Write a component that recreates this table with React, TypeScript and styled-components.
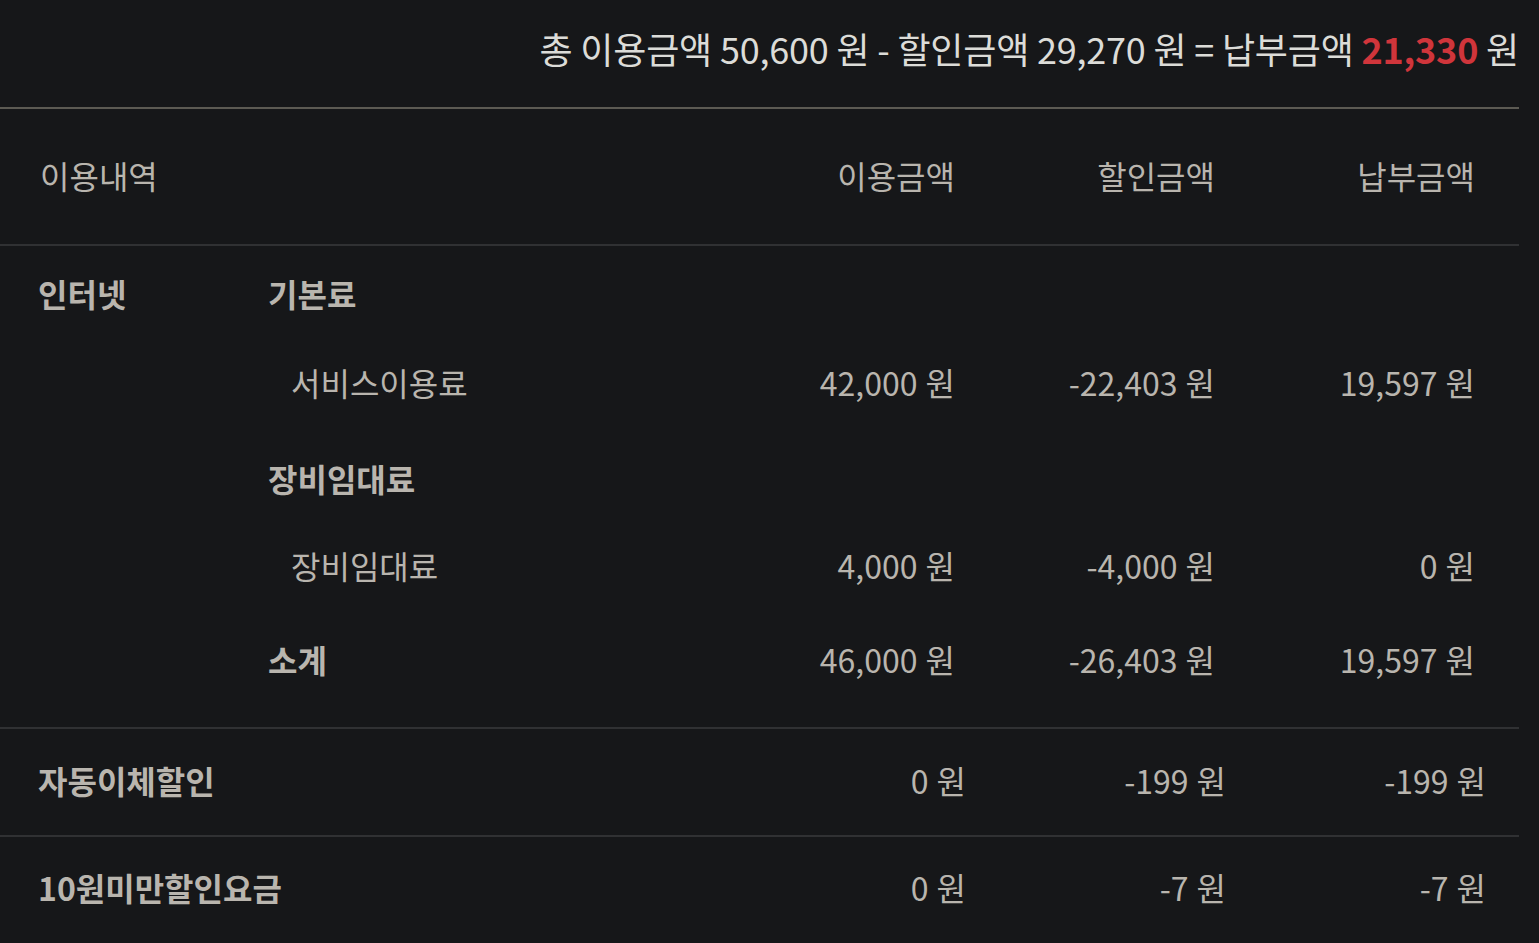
import React from "react";
import styled, { createGlobalStyle } from "styled-components";

const Global = createGlobalStyle`
  html, body {
    margin: 0;
    padding: 0;
    background: #161719;
  }
  body {
    font-family: "Noto Sans CJK KR", "Noto Sans", sans-serif;
    color: #b9b5ae;
  }
`;

const Page = styled.div`
  width: 1519px;
  min-height: 943px;
  background: #161719;
`;

const Summary = styled.div`
  height: 95px;
  padding-bottom: 12px;
  display: flex;
  align-items: center;
  justify-content: flex-end;
  border-bottom: 2px solid #5c5a53;
  font-size: 36px;
  letter-spacing: -0.2px;
  color: #dcdcd8;
  white-space: pre;
`;

const Red = styled.span`
  color: #d0353b;
  font-weight: 700;
`;

const Row = styled.div<{ $h: number; $pr: number; $pb: number; $line?: boolean }>`
  box-sizing: border-box;
  display: flex;
  align-items: center;
  height: ${(p) => p.$h}px;
  padding-right: ${(p) => p.$pr}px;
  padding-bottom: ${(p) => p.$pb}px;
  border-bottom: ${(p) => (p.$line ? "2px solid #303133" : "none")};
`;

const Label = styled.div<{ $bold?: boolean; $pl: number }>`
  flex: 1;
  padding-left: ${(p) => p.$pl}px;
  font-size: 32px;
  font-weight: ${(p) => (p.$bold ? 700 : 400)};
  color: #b9b5ae;
`;

const Cell = styled.div<{ $dy?: number }>`
  width: 260px;
  text-align: right;
  font-size: 32px;
  color: #b9b5ae;
  white-space: nowrap;
`;

const Won = styled.span`
  margin-left: 8px;
`;

const Group = styled.div`
  display: flex;
  padding-top: 17px;
  padding-bottom: 38px;
  border-bottom: 2px solid #303133;
`;

const GroupName = styled.div`
  width: 230px;
  padding-left: 38px;
  height: 60px;
  line-height: 60px;
  font-size: 32px;
  font-weight: 700;
  flex-shrink: 0;
`;

const Sub = styled.div`
  flex: 1;
  display: flex;
  flex-direction: column;
`;

const SubRow = styled.div<{ $mt: number }>`
  display: flex;
  align-items: center;
  height: 60px;
  margin-top: ${(p) => p.$mt}px;
  padding-right: 44px;
`;

type Vals = [string, string, string];

const Money = ({ v }: { v: string }) => (
  <Cell>
    {v}
    <Won>원</Won>
  </Cell>
);

const Values = ({ vals }: { vals?: Vals }) =>
  vals ? (
    <>
      {vals.map((v, i) => (
        <Money key={i} v={v} />
      ))}
    </>
  ) : null;

const subRows: { label: string; bold: boolean; mt: number; pl: number; vals?: Vals }[] = [
  { label: "기본료", bold: true, mt: 0, pl: 0 },
  { label: "서비스이용료", bold: false, mt: 29, pl: 23, vals: ["42,000", "-22,403", "19,597"] },
  { label: "장비임대료", bold: true, mt: 36, pl: 0 },
  { label: "장비임대료", bold: false, mt: 27, pl: 23, vals: ["4,000", "-4,000", "0"] },
  { label: "소계", bold: true, mt: 34, pl: 0, vals: ["46,000", "-26,403", "19,597"] },
];

export default function App() {
  return (
    <Page>
      <Global />
      <Summary>
        총 이용금액 50,600 원 - 할인금액 29,270 원 = 납부금액 <Red>21,330</Red> 원
      </Summary>
      <Row $h={137} $pr={44} $pb={3} $line>
        <Label $pl={40}>이용내역</Label>
        <Cell>이용금액</Cell>
        <Cell>할인금액</Cell>
        <Cell>납부금액</Cell>
      </Row>
      <Group>
        <GroupName>인터넷</GroupName>
        <Sub>
          {subRows.map((r, i) => (
            <SubRow key={i} $mt={r.mt}>
              <Label $bold={r.bold} $pl={r.pl}>
                {r.label}
              </Label>
              <Values vals={r.vals} />
            </SubRow>
          ))}
        </Sub>
      </Group>
      <Row $h={108} $pr={33} $pb={5} $line>
        <Label $bold $pl={38}>자동이체할인</Label>
        <Values vals={["0", "-199", "-199"]} />
      </Row>
      <Row $h={105} $pr={33} $pb={5}>
        <Label $bold $pl={38}>10원미만할인요금</Label>
        <Values vals={["0", "-7", "-7"]} />
      </Row>
    </Page>
  );
}
